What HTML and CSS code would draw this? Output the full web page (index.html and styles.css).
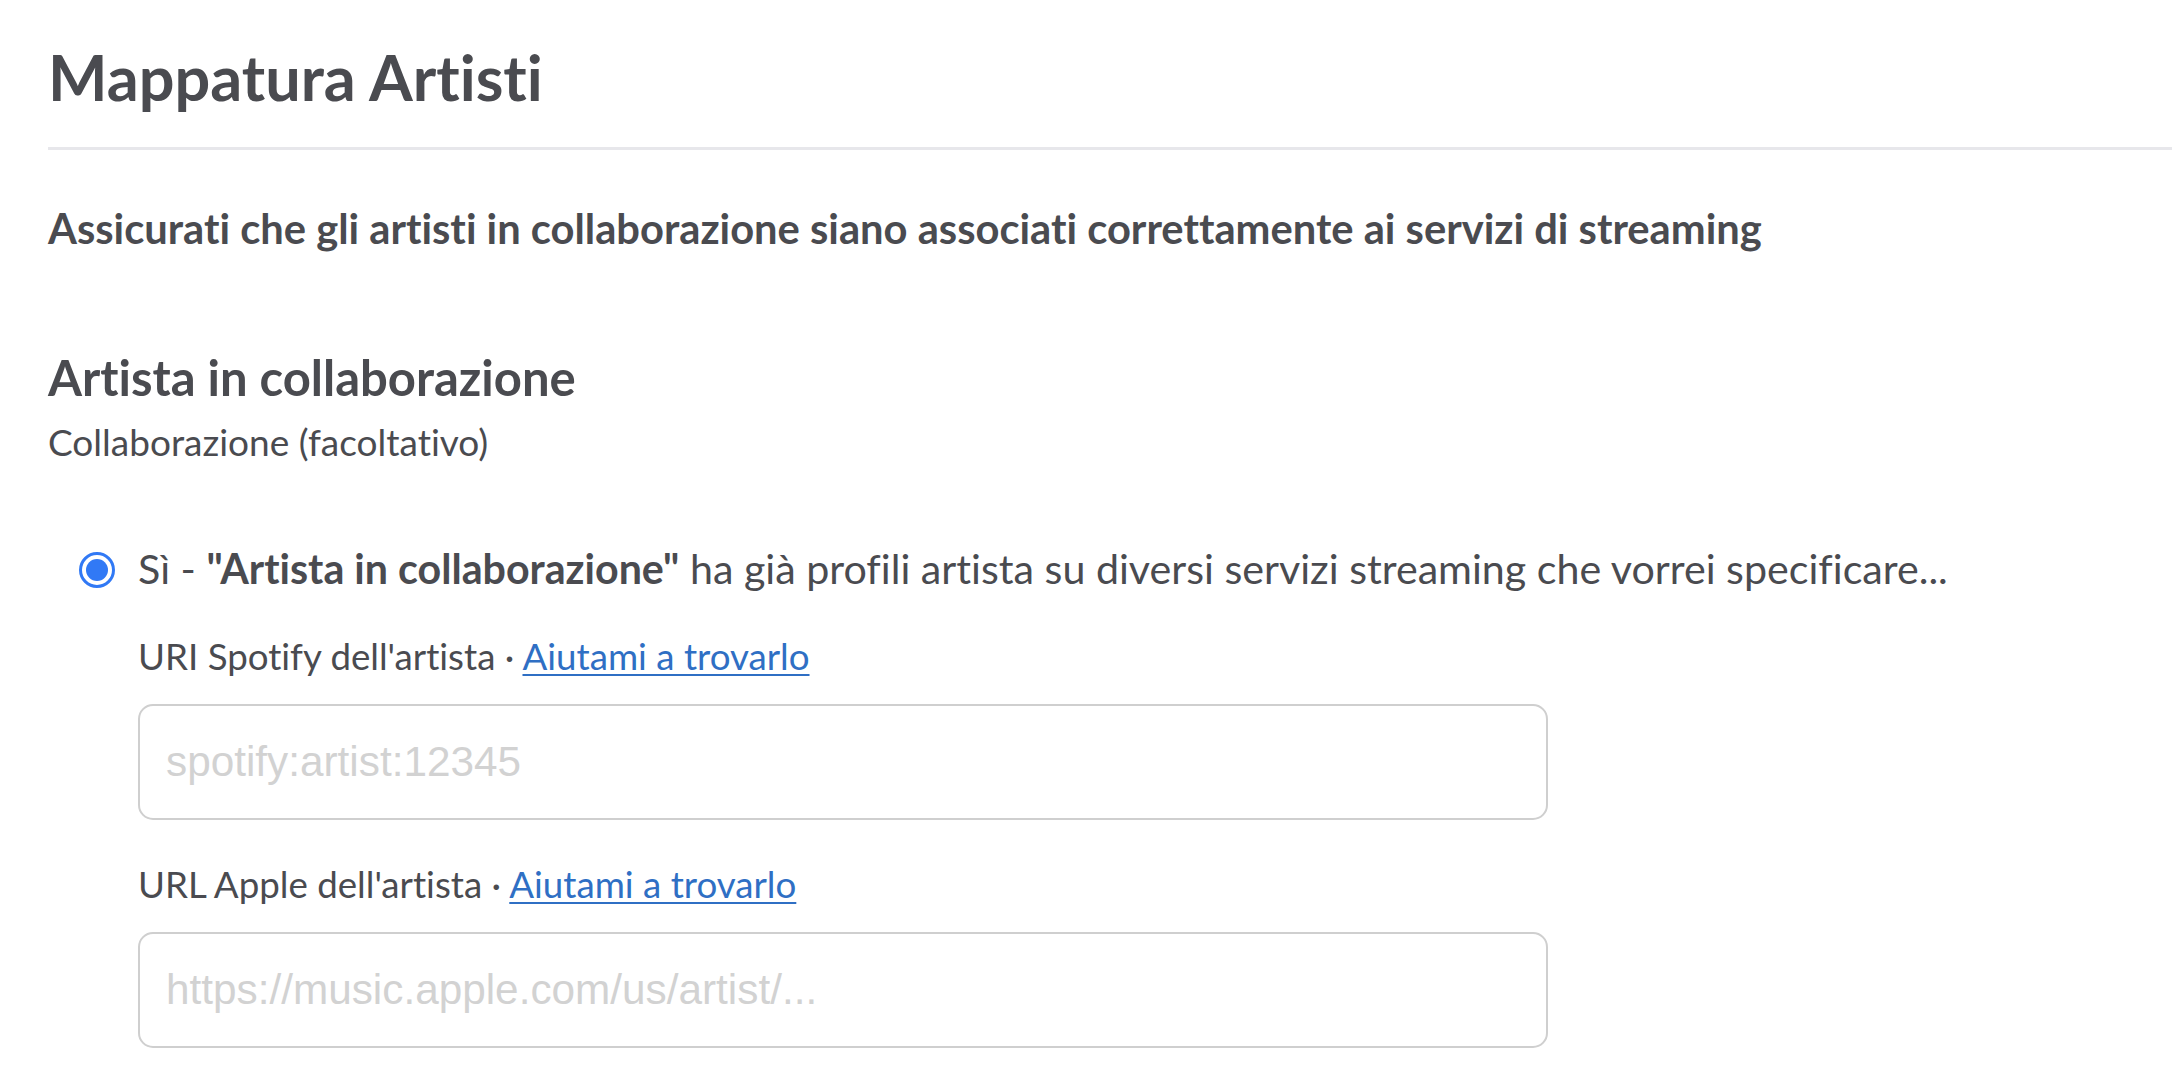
FILE: index.html
```html
<!DOCTYPE html>
<html lang="it">
<head>
<meta charset="utf-8">
<title>Mappatura Artisti</title>
<link rel="stylesheet" href="styles.css">
</head>
<body>
<main class="page">
  <h1 class="title">Mappatura Artisti</h1>
  <hr class="divider">
  <p class="lead">Assicurati che gli artisti in collaborazione siano associati correttamente ai servizi di streaming</p>
  <h2 class="section-title">Artista in collaborazione</h2>
  <p class="section-sub">Collaborazione (facoltativo)</p>
  <label class="radio-row">
    <span class="radio"><span class="radio-dot"></span></span>
    <span class="radio-text">Sì - <b>"Artista in collaborazione"</b> ha già profili artista su diversi servizi streaming che vorrei specificare...</span>
  </label>
  <div class="fields">
    <div class="field">
      <div class="field-label">URI Spotify dell'artista · <a href="#" class="help">Aiutami a trovarlo</a></div>
      <div class="input"><span class="placeholder">spotify:artist:12345</span></div>
    </div>
    <div class="field">
      <div class="field-label">URL Apple dell'artista · <a href="#" class="help">Aiutami a trovarlo</a></div>
      <div class="input"><span class="placeholder">https://music.apple.com/us/artist/...</span></div>
    </div>
  </div>
</main>
</body>
</html>
```
FILE: styles.css
```css
* { box-sizing: border-box; }
body { margin: 0; background: #fff; font-family: Lato, "Noto Sans", sans-serif; color: #4a4b50; font-variant-ligatures: none; }
.page { padding: 39px 0 0 48px; }
.title { margin: 0; font-size: 63px; line-height: 76px; font-weight: 700; }
.divider { margin: 32px 0 0; border: 0; height: 3px; background: #e7e7eb; }
.lead { margin: 53px 0 0; font-size: 41.7px; line-height: 50px; font-weight: 700; }
.section-title { margin: 95px 0 0; font-size: 49px; line-height: 58px; font-weight: 700; }
.section-sub { margin: 14px 0 0; font-size: 37px; line-height: 44px; font-weight: 400; }
.radio-row { display: flex; align-items: flex-start; margin: 79px 0 0 31px; gap: 23px; font-size: 41.2px; line-height: 50px; }
.radio { width: 36px; height: 36px; margin-top: 9px; border-radius: 50%; border: 3px solid #3179f5; display: flex; align-items: center; justify-content: center; flex: none; }
.radio-dot { width: 22px; height: 22px; border-radius: 50%; background: #3179f5; }
.radio-text b { font-weight: 700; }
.fields { margin-left: 90px; }
.field { margin-top: 41px; }
.field + .field { margin-top: 42px; }
.field-label { font-size: 36.7px; line-height: 44px; }
.help { color: #2f6fc4; text-decoration: underline; text-decoration-thickness: 2px; text-underline-offset: 4px; }
.input { margin-top: 26px; width: 1410px; height: 116px; border: 2px solid #cfcfcf; border-radius: 15px; display: flex; align-items: center; padding-left: 26px; }
.placeholder { font-family: "Liberation Sans", Arial, sans-serif; font-size: 42.3px; color: #d2d2d2; }
```
